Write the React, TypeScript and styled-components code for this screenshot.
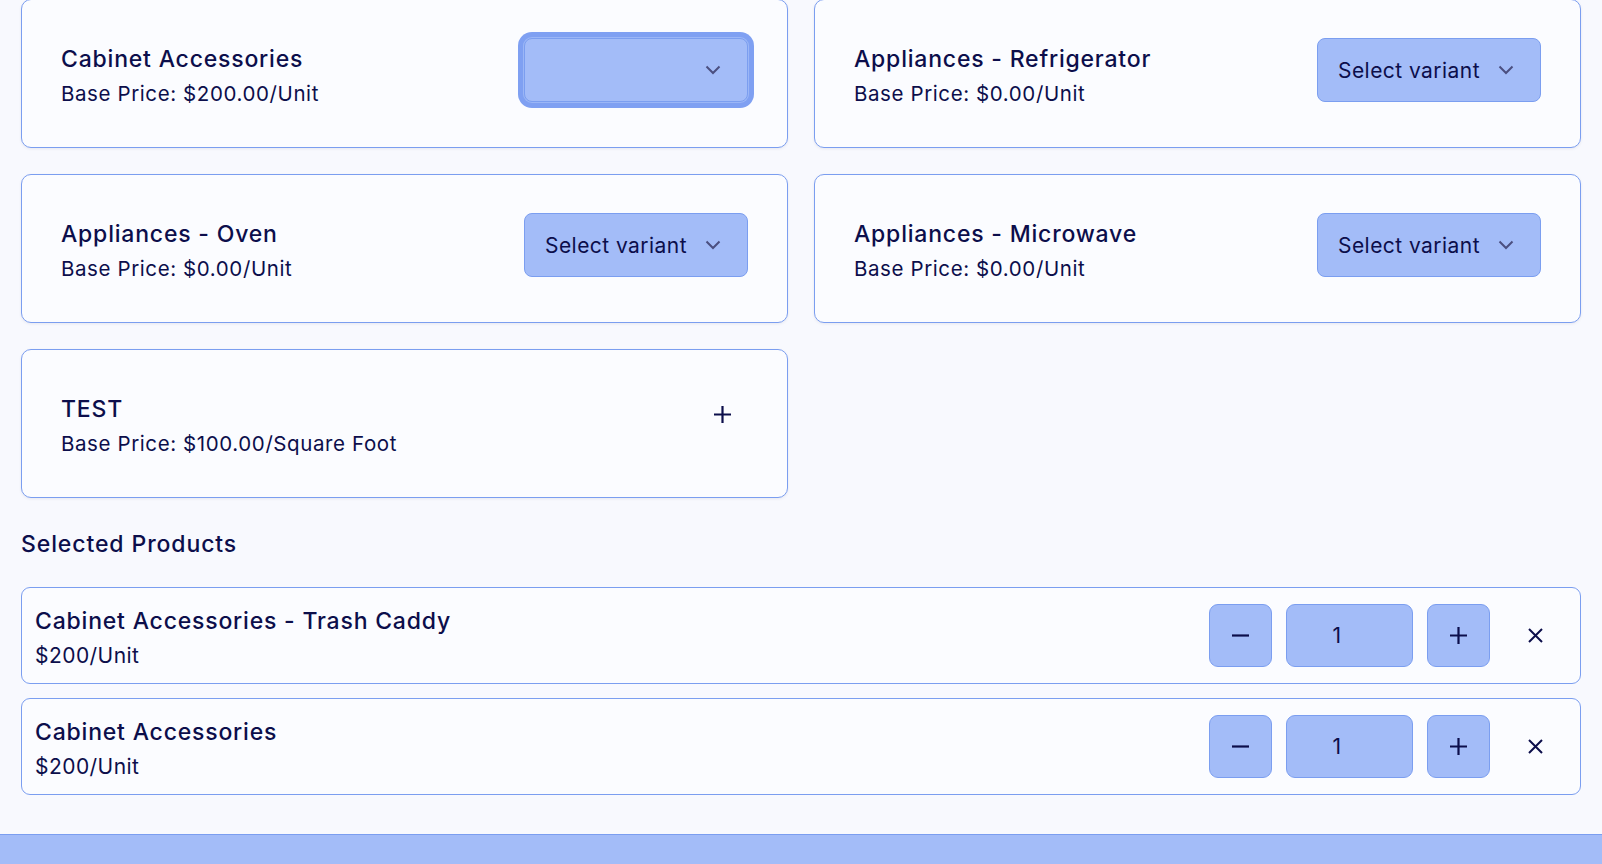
import styled, { createGlobalStyle, css } from "styled-components";

const GlobalStyle = createGlobalStyle`
  body {
    margin: 0;
    background: #f8f9fe;
    font-family: Inter, "Noto Sans", sans-serif;
    color: #0c0e4b;
  }
  * { box-sizing: border-box; }
`;

const Page = styled.div`
  margin-top: -1px;
  padding: 0 21px;
`;

const ProductGrid = styled.div`
  display: grid;
  grid-template-columns: 1fr 1fr;
  gap: 26px;
`;

const ProductCard = styled.div`
  height: 149px;
  padding: 38px 39px 0 39px;
  border: 1px solid #7b9ef0;
  border-radius: 10px;
  background: #fbfcff;
  box-shadow: 0 1px 3px rgba(20, 30, 80, 0.08);
  display: flex;
  justify-content: space-between;
  align-items: flex-start;
`;

const Info = styled.div`
  padding-top: 5px;
`;

const Title = styled.div`
  font-size: 23px;
  font-weight: 500;
  line-height: 32px;
  letter-spacing: 0.8px;
`;

const Price = styled.div`
  font-size: 20.5px;
  line-height: 28px;
  margin-top: 5px;
  letter-spacing: 0.6px;
`;

const VariantSelect = styled.button<{ $focused?: boolean }>`
  width: 224px;
  height: 64px;
  padding: 0 26px 0 20px;
  border: 1px solid #7b9ef0;
  border-radius: 8px;
  background: #a3bcf8;
  color: #0c0e4b;
  font-family: inherit;
  font-size: 21px;
  letter-spacing: 0.45px;
  display: flex;
  align-items: center;
  justify-content: space-between;
  cursor: pointer;
  ${(p) =>
    p.$focused &&
    css`
      box-shadow: 0 0 0 1px #9bb6f6, 0 0 0 6px #7fa0f2;
    `}
`;

const Chevron = styled.svg`
  color: #4b4f80;
  flex-shrink: 0;
`;

const AddButton = styled.button`
  width: 51px;
  height: 51px;
  margin-top: 1px;
  border: none;
  background: transparent;
  color: #0c0e4b;
  display: flex;
  align-items: center;
  justify-content: center;
  padding: 0;
  cursor: pointer;
`;

const SectionHeading = styled.h2`
  margin: 30px 0 27px;
  font-size: 23px;
  font-weight: 500;
  line-height: 32px;
  letter-spacing: 0.9px;
`;

const SelectedList = styled.div`
  display: flex;
  flex-direction: column;
  gap: 14px;
`;

const SelectedItem = styled.div`
  height: 97px;
  padding: 0 13px;
  border: 1px solid #7b9ef0;
  border-radius: 9px;
  background: #fbfcff;
  display: flex;
  align-items: center;
  justify-content: space-between;
`;

const ItemInfo = styled.div`
  padding-top: 4px;
`;

const ItemPrice = styled.div`
  font-size: 21px;
  line-height: 29px;
  margin-top: 4px;
  letter-spacing: 0.45px;
`;

const Controls = styled.div`
  display: flex;
  align-items: center;
  gap: 13.5px;
`;

const StepButton = styled.button`
  width: 63.5px;
  height: 63.5px;
  border: 1px solid #7b9ef0;
  border-radius: 9px;
  background: #a3bcf8;
  color: #0c0e4b;
  display: flex;
  align-items: center;
  justify-content: center;
  padding: 0;
  cursor: pointer;
`;

const QtyBox = styled.div`
  width: 127.5px;
  height: 63.5px;
  border: 1px solid #7b9ef0;
  border-radius: 9px;
  background: #a3bcf8;
  font-size: 21px;
  display: flex;
  align-items: center;
  justify-content: center;
  padding-right: 25px;
`;

const RemoveButton = styled.button`
  width: 63.5px;
  height: 63.5px;
  border: none;
  background: transparent;
  color: #0c0e4b;
  display: flex;
  align-items: center;
  justify-content: center;
  padding: 0;
  cursor: pointer;
`;

const FooterBar = styled.div`
  margin-top: 39px;
  height: 40px;
  background: #a3bcf8;
  border-top: 1px solid #7b9ef0;
`;

const ChevronIcon = () => (
  <Chevron width="16" height="10" viewBox="0 0 16 10" fill="none">
    <polyline points="1.5,1.5 8,8 14.5,1.5" stroke="currentColor" strokeWidth="2" />
  </Chevron>
);

const PlusIcon = () => (
  <svg width="17" height="17" viewBox="0 0 17 17" fill="none">
    <path d="M8.5 0v17M0 8.5h17" stroke="currentColor" strokeWidth="2.2" />
  </svg>
);

const MinusIcon = () => (
  <svg width="17" height="17" viewBox="0 0 17 17" fill="none">
    <path d="M0 8.5h17" stroke="currentColor" strokeWidth="2.2" />
  </svg>
);

const CloseIcon = () => (
  <svg width="15" height="15" viewBox="0 0 15 15" fill="none">
    <path d="M1 1l13 13M14 1L1 14" stroke="currentColor" strokeWidth="2" />
  </svg>
);

type Product = {
  name: string;
  price: string;
  kind: "variant" | "add";
  focused?: boolean;
  label?: string;
};

const products: Product[] = [
  { name: "Cabinet Accessories", price: "Base Price: $200.00/Unit", kind: "variant", focused: true, label: "" },
  { name: "Appliances - Refrigerator", price: "Base Price: $0.00/Unit", kind: "variant", label: "Select variant" },
  { name: "Appliances - Oven", price: "Base Price: $0.00/Unit", kind: "variant", label: "Select variant" },
  { name: "Appliances - Microwave", price: "Base Price: $0.00/Unit", kind: "variant", label: "Select variant" },
  { name: "TEST", price: "Base Price: $100.00/Square Foot", kind: "add" },
];

const selected = [
  { name: "Cabinet Accessories - Trash Caddy", price: "$200/Unit", qty: 1 },
  { name: "Cabinet Accessories", price: "$200/Unit", qty: 1 },
];

const App = () => {
  return (
    <>
      <GlobalStyle />
      <Page>
        <ProductGrid>
          {products.map((p) => (
            <ProductCard key={p.name}>
              <Info>
                <Title>{p.name}</Title>
                <Price>{p.price}</Price>
              </Info>
              {p.kind === "variant" ? (
                <VariantSelect $focused={p.focused}>
                  <span>{p.label}</span>
                  <ChevronIcon />
                </VariantSelect>
              ) : (
                <AddButton>
                  <PlusIcon />
                </AddButton>
              )}
            </ProductCard>
          ))}
        </ProductGrid>

        <SectionHeading>Selected Products</SectionHeading>

        <SelectedList>
          {selected.map((s) => (
            <SelectedItem key={s.name}>
              <ItemInfo>
                <Title>{s.name}</Title>
                <ItemPrice>{s.price}</ItemPrice>
              </ItemInfo>
              <Controls>
                <StepButton>
                  <MinusIcon />
                </StepButton>
                <QtyBox>{s.qty}</QtyBox>
                <StepButton>
                  <PlusIcon />
                </StepButton>
                <RemoveButton>
                  <CloseIcon />
                </RemoveButton>
              </Controls>
            </SelectedItem>
          ))}
        </SelectedList>
      </Page>
      <FooterBar />
    </>
  );
};

export default App;
